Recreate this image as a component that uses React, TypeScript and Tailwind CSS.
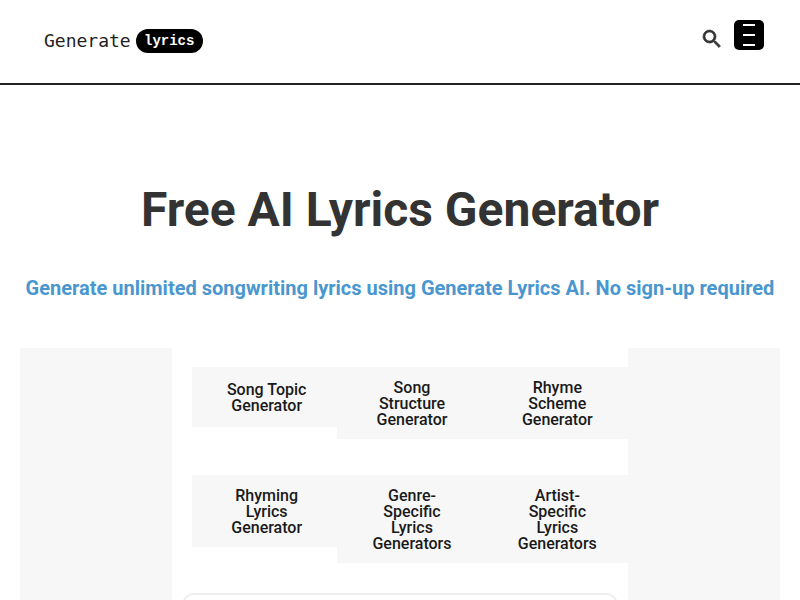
import React from 'react';

const row1 = ['Song Topic Generator', 'Song Structure Generator', 'Rhyme Scheme Generator'];
const row2 = ['Rhyming Lyrics Generator', 'Genre-Specific Lyrics Generators', 'Artist-Specific Lyrics Generators'];

const GenRow = ({ items }: { items: string[] }) => (
  <div className="grid grid-cols-3 items-start">
    {items.map((label) => (
      <a
        key={label}
        className="flex min-h-[60px] items-center justify-center bg-[#f7f7f7] pt-[13px] pr-7 pb-[11px] pl-[32px] text-center text-base leading-4 font-medium text-[#1a1a1a]"
      >
        {label}
      </a>
    ))}
  </div>
);

export default function App() {
  return (
    <div className="h-[600px] overflow-hidden bg-white font-['Roboto',sans-serif]">
      <header className="flex h-[85px] items-center justify-between border-b-2 border-[#222] pr-9 pl-11">
        <a className="mt-[-1px] flex items-center gap-[5px]">
          <span className="font-['DejaVu_Sans_Mono',monospace] text-lg text-[#222]">Generate</span>
          <span className="flex h-6 w-[67px] items-center justify-center rounded-full bg-black font-['Liberation_Mono',monospace] text-sm font-bold text-white">
            lyrics
          </span>
        </a>
        <div className="mb-[13px] flex items-center gap-2.5">
          <svg className="mt-[7px] h-6 w-6 text-[#333]" viewBox="0 0 24 24" fill="currentColor" stroke="currentColor" strokeWidth="0.7">
            <path d="M15.5 14h-.79l-.28-.27A6.47 6.47 0 0 0 16 9.5 6.5 6.5 0 1 0 9.5 16c1.61 0 3.09-.59 4.23-1.57l.27.28v.79l5 4.99L20.49 19l-4.99-5zm-6 0C7.01 14 5 11.99 5 9.5S7.01 5 9.5 5 14 7.01 14 9.5 11.99 14 9.5 14z" />
          </svg>
          <button className="flex h-[30px] w-[30px] flex-col items-center justify-center gap-2 rounded-[5px] bg-black">
            <span className="h-0.5 w-3 bg-white" />
            <span className="h-0.5 w-3 bg-white" />
            <span className="h-0.5 w-3 bg-white" />
          </button>
        </div>
      </header>

      <h1 className="mt-[97px] text-center text-[48px] leading-[56px] font-bold text-[#333]">
        Free AI Lyrics Generator
      </h1>
      <p className="mt-[38px] text-center text-xl leading-6 font-bold text-[#4a97d0]">
        Generate unlimited songwriting lyrics using Generate Lyrics AI. No sign-up required
      </p>

      <div className="mx-5 mt-12 flex">
        <div className="h-[300px] w-[152px] bg-[#f7f7f7]" />
        <main className="flex-1 pt-[19px]">
          <div className="ml-5 flex flex-col gap-9">
            <GenRow items={row1} />
            <GenRow items={row2} />
          </div>
          <div className="mx-2.5 mt-[30px] h-20 rounded-xl border-2 border-[#eee]" />
        </main>
        <div className="h-[300px] w-[152px] bg-[#f7f7f7]" />
      </div>
    </div>
  );
}
